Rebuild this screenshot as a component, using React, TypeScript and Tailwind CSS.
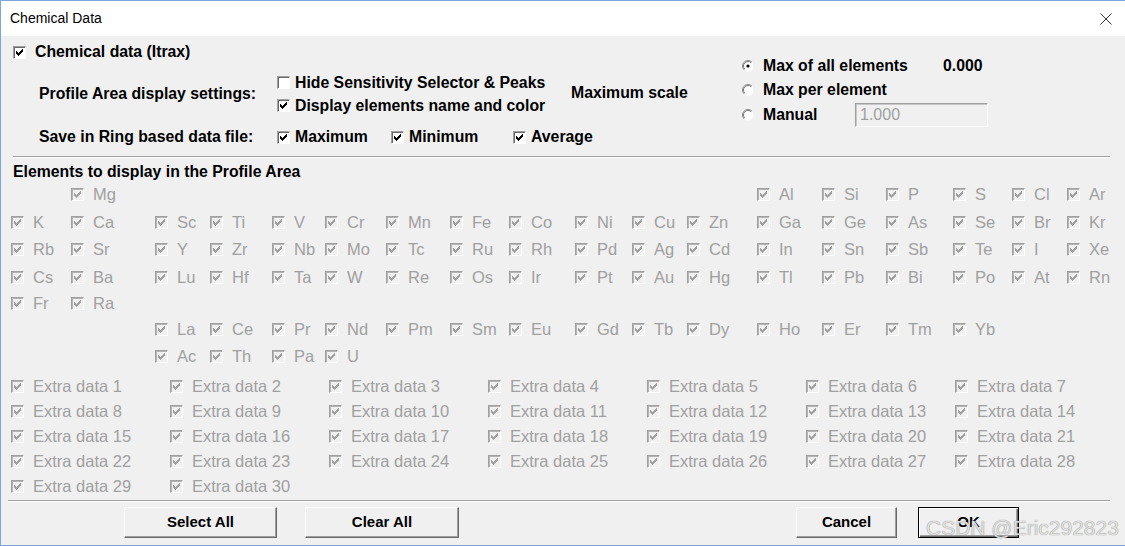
import React from "react";

const ELEMENT_ROWS: string[][] = [
  ["", "Mg", "", "", "", "", "", "", "", "", "", "", "Al", "Si", "P", "S", "Cl", "Ar"],
  ["K", "Ca", "Sc", "Ti", "V", "Cr", "Mn", "Fe", "Co", "Ni", "Cu", "Zn", "Ga", "Ge", "As", "Se", "Br", "Kr"],
  ["Rb", "Sr", "Y", "Zr", "Nb", "Mo", "Tc", "Ru", "Rh", "Pd", "Ag", "Cd", "In", "Sn", "Sb", "Te", "I", "Xe"],
  ["Cs", "Ba", "Lu", "Hf", "Ta", "W", "Re", "Os", "Ir", "Pt", "Au", "Hg", "Tl", "Pb", "Bi", "Po", "At", "Rn"],
  ["Fr", "Ra"],
  ["", "", "La", "Ce", "Pr", "Nd", "Pm", "Sm", "Eu", "Gd", "Tb", "Dy", "Ho", "Er", "Tm", "Yb"],
  ["", "", "Ac", "Th", "Pa", "U"],
];

const EXTRA = Array.from({ length: 30 }, (_, i) => `Extra data ${i + 1}`);

// classic 7x7 windows tick, drawn pixel by pixel
const TICK =
  "M8 2h1v1H8z M7 3h2v1H7z M2 4h1v1H2z M6 4h3v1H6z M2 5h2v1H2z M5 5h3v1H5z M2 6h5v1H2z M3 7h3v1H3z M4 8h1v1H4z";

function CheckBox({ checked = true, disabled = false }: { checked?: boolean; disabled?: boolean }) {
  return (
    <span
      className={`inline-block h-[13px] w-[13px] shrink-0 border border-t-[#a0a0a0] border-l-[#a0a0a0] border-r-white border-b-white ${
        disabled ? "bg-[#f0f0f0] shadow-[inset_1px_1px_0_#b4b4b4]" : "bg-white shadow-[inset_1px_1px_0_#696969]"
      }`}
    >
      {checked && (
        <svg width="11" height="11" viewBox="0 0 11 11" className="block" shapeRendering="crispEdges">
          <path d={TICK} fill={disabled ? "#a0a0a0" : "#000"} />
        </svg>
      )}
    </span>
  );
}

function Radio({ on = false }: { on?: boolean }) {
  return (
    <svg width="12" height="12" viewBox="0 0 12 12" className="shrink-0">
      <circle cx="6" cy="6" r="5.5" fill="#fff" />
      <path d="M2.1 9.9 A5.5 5.5 0 0 1 9.9 2.1" stroke="#8a8a8a" strokeWidth="1" fill="none" />
      <path d="M2.8 9.2 A4.5 4.5 0 0 1 9.2 2.8" stroke="#555" strokeWidth="0.8" fill="none" />
      {on && <circle cx="6" cy="6" r="1.6" fill="#000" />}
    </svg>
  );
}

function Check({ label, checked = true }: { label: string; checked?: boolean }) {
  return (
    <div className="flex items-center gap-[5px]">
      <CheckBox checked={checked} />
      <span className="text-[15.8px] font-bold text-black">{label}</span>
    </div>
  );
}

function Item({ label }: { label: string }) {
  return (
    <div className="flex items-center gap-[9px]">
      <CheckBox disabled />
      <span className="text-[16.5px] text-[#a0a0a0]">{label}</span>
    </div>
  );
}

function Button({ label, isDefault = false }: { label: string; isDefault?: boolean }) {
  return (
    <button
      className={`h-[31px] w-full bg-[#f0f0f0] text-[15px] font-bold text-black ${
        isDefault
          ? "border border-black shadow-[inset_1px_1px_0_#fff,inset_-1px_-1px_0_#696969,inset_-2px_-2px_0_#a0a0a0]"
          : "border border-t-white border-l-white border-r-[#696969] border-b-[#696969] shadow-[inset_-1px_-1px_0_#a0a0a0]"
      }`}
    >
      {label}
    </button>
  );
}

export default function App() {
  return (
    <div className="relative flex h-[546px] w-[1125px] flex-col overflow-hidden border-t border-b border-l border-[#7aa6dc] bg-[#f0f0f0] font-['Liberation_Sans',Arial,sans-serif] text-black">
      {/* title bar */}
      <div className="flex h-[35px] shrink-0 items-center justify-between bg-white pl-[9px] pr-[13px]">
        <span className="text-[14px]">Chemical Data</span>
        <svg width="12" height="12" viewBox="0 0 12 12">
          <path d="M0.5 0.5 L11.5 11.5 M11.5 0.5 L0.5 11.5" stroke="#333" strokeWidth="1" />
        </svg>
      </div>

      {/* settings */}
      <div className="flex h-[120px] shrink-0">
        <div className="w-[740px] pt-[6px]">
          <div className="ml-[12px] flex h-[20px] items-center gap-[9px]">
            <CheckBox />
            <span className="text-[15.8px] font-bold">Chemical data (Itrax)</span>
          </div>

          <div className="mt-[9px] flex h-[46px] items-center pl-[38px]">
            <span className="w-[238px] text-[15.8px] font-bold">Profile Area display settings:</span>
            <div className="flex w-[294px] flex-col">
              <div className="flex h-[23px] items-center">
                <Check label="Hide Sensitivity Selector & Peaks" checked={false} />
              </div>
              <div className="flex h-[23px] items-center">
                <Check label="Display elements name and color" />
              </div>
            </div>
            <span className="-mt-[3px] text-[15.8px] font-bold">Maximum scale</span>
          </div>

          <div className="mt-[10px] flex h-[20px] items-center pl-[38px]">
            <span className="w-[238px] text-[15.8px] font-bold">Save in Ring based data file:</span>
            <div className="w-[114px]">
              <Check label="Maximum" />
            </div>
            <div className="w-[122px]">
              <Check label="Minimum" />
            </div>
            <Check label="Average" />
          </div>
        </div>

        <div className="flex flex-col pt-[17px] pl-[1px]">
          <div className="flex h-[25px] items-center">
            <div className="flex w-[201px] items-center gap-[9px]">
              <Radio on />
              <span className="text-[15.8px] font-bold">Max of all elements</span>
            </div>
            <span className="text-[15.8px] font-bold">0.000</span>
          </div>
          <div className="-mt-[1px] flex h-[25px] items-center gap-[9px]">
            <Radio />
            <span className="text-[15.8px] font-bold">Max per element</span>
          </div>
          <div className="flex h-[25px] items-center">
            <div className="flex w-[113px] items-center gap-[9px]">
              <Radio />
              <span className="text-[15.8px] font-bold">Manual</span>
            </div>
            <div className="flex h-[24px] w-[133px] items-center border border-t-[#a0a0a0] border-l-[#a0a0a0] border-r-white border-b-white bg-[#f0f0f0] pl-[4px] text-[16px] text-[#a0a0a0] shadow-[inset_1px_1px_0_#c8c8c8]">
              1.000
            </div>
          </div>
        </div>
      </div>

      <div className="ml-[12px] h-[2px] w-[1097px] shrink-0 border-t border-b border-t-[#a0a0a0] border-b-white" />

      {/* elements */}
      <div className="ml-[12px] mt-[5px] flex h-[17px] shrink-0 items-center text-[15.8px] font-bold">
        Elements to display in the Profile Area
      </div>

      <div className="ml-[10px] grid shrink-0 grid-cols-[60px_84px_55px_62px_53px_61px_64px_59px_66px_57px_55px_70px_65px_64px_67px_59px_55px_1fr] grid-rows-[28px_28px_27px_28px_25px_27px_27px]">
        {ELEMENT_ROWS.flatMap((row, r) =>
          Array.from({ length: 18 }, (_, c) => {
            const el = row[c] ?? "";
            return (
              <div key={`${r}-${c}`} className="flex items-center">
                {el && <Item label={el} />}
              </div>
            );
          })
        )}
      </div>

      <div className="ml-[10px] mt-[4px] grid shrink-0 grid-cols-[159px_159px_159px_159px_159px_149px_1fr] auto-rows-[25px]">
        {EXTRA.map((x) => (
          <div key={x} className="flex items-center">
            <Item label={x} />
          </div>
        ))}
      </div>

      <div className="ml-[7px] mt-[1px] h-[2px] w-[1102px] shrink-0 border-t border-b border-t-[#a0a0a0] border-b-white" />

      {/* buttons */}
      <div className="mt-[5px] flex shrink-0 items-center pl-[123px]">
        <div className="w-[153px]">
          <Button label="Select All" />
        </div>
        <div className="ml-[28px] w-[154px]">
          <Button label="Clear All" />
        </div>
        <div className="ml-[337px] w-[101px]">
          <Button label="Cancel" />
        </div>
        <div className="ml-[21px] w-[101px]">
          <Button label="OK" isDefault />
        </div>
      </div>

      {/* watermark */}
      <span className="pointer-events-none absolute left-[925px] top-[511px] text-[21px] text-[#dedede] [text-shadow:0_0_1px_#7a7a7a]">
        CSDN @Eric292823
      </span>
    </div>
  );
}
